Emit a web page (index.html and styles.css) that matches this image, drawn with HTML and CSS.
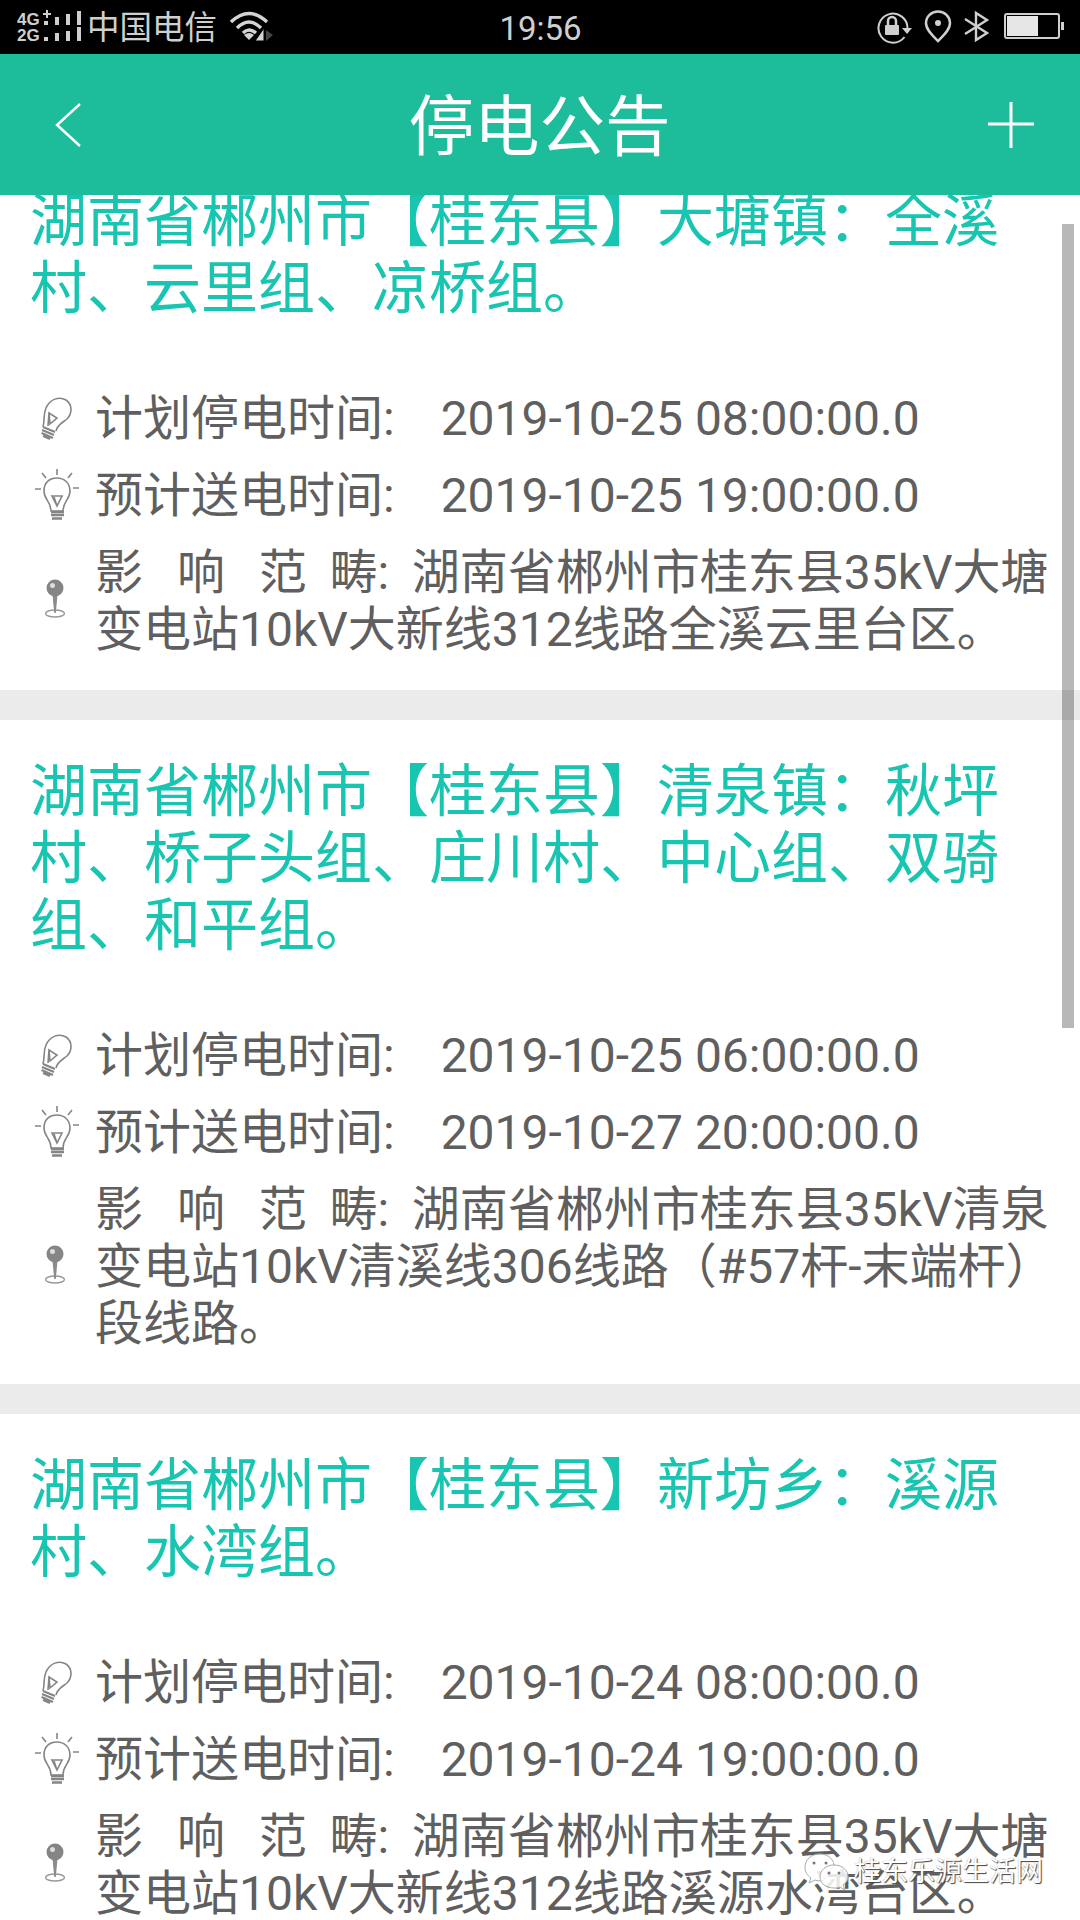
FILE: index.html
```html
<!DOCTYPE html>
<html lang="zh-CN">
<head>
    <meta charset="UTF-8">
    <meta name="viewport" content="width=device-width, initial-scale=1.0">
    <title>停电公告</title>
    <link rel="stylesheet" href="styles.css">
</head>
<body>
    <!-- Shared icons -->
    <svg class="sprite" width="0" height="0">
        <symbol id="bulb-off" viewBox="0 0 46 56">
            <g fill="none" stroke="#858585" stroke-width="1.6">
                <path d="M9 36C11 28 9 24 12 17C16 8 25 5 32 9C39 14 38 23 33 28C28 32 23 34 22 40"/>
                <path d="M15 22L23 27L16 33ZM15 22L14 35"/>
                <path d="M9 36L21 41M8 39L20 44M7.500 42L19 47M9 45L16 48" stroke-width="2"/>
            </g>
        </symbol>
        <symbol id="bulb-on" viewBox="0 0 46 56">
            <g fill="none" stroke="#858585" stroke-width="1.6">
                <path d="M17 43C17 33 10 32 10 23C10 14 16 10 23 10C30 10 36 15 36 23C36 32 29 33 29 43Z"/>
                <path d="M18 28H28L23 38ZM20 29L23 38"/>
                <path d="M23 1V7M8 5L12 10M38 5L34 10M1 21H7M39 20H45"/>
                <path d="M17 44H30M17 47H30M18 50.500H28" stroke-width="2.6"/>
            </g>
        </symbol>
        <symbol id="pin" viewBox="0 0 46 56">
            <ellipse cx="21" cy="40.500" rx="9.500" ry="3.500" fill="none" stroke="#999" stroke-width="1.400"/>
            <path d="M18.500 22H23.500L21.800 40H20.200Z" fill="#8c8c8c"/>
            <circle cx="21" cy="15" r="8.500" fill="#858585"/>
            <circle cx="18.500" cy="12.500" r="2.500" fill="#ddd"/>
        </symbol>
    </svg>

    <div class="status-bar">
        <div class="status-left">
            <svg class="signal" width="68" height="36" viewBox="0 0 68 36">
                <g fill="#cfcfcf">
                    <text x="0" y="16" class="net">4G</text>
                    <text x="0" y="32" class="net">2G</text>
                    <path d="M26 4H34V6H26ZM29 1H31V9H29Z"/>
                    <path d="M27 12H31V16H27ZM38 8H42V16H38ZM49 5H53V16H49ZM60 2H64V16H60Z"/>
                    <path d="M27 28H31V32H27ZM38 24H42V32H38ZM49 22H53V32H49ZM60 18H64V32H60Z"/>
                </g>
            </svg>
            <span class="carrier">中国电信</span>
            <svg class="wifi" width="44" height="32" viewBox="0 0 44 32">
                <g fill="none" stroke="#d4d4d4" stroke-width="3.4">
                    <path d="M1 11Q19 -6 37 11"/>
                    <path d="M7 17Q19 5 31 17"/>
                    <path d="M13 22Q19 16 26 22"/>
                </g>
                <path d="M19 29L14 24Q19 20 24 24Z" fill="#d4d4d4"/>
                <path d="M34 17V30H25Z" fill="#d4d4d4" stroke="#000"/>
                <path d="M36 19L43 24L36 30Z" fill="#444"/>
            </svg>
        </div>
        <div class="clock">19:56</div>
        <div class="status-right">
            <svg width="38" height="34" viewBox="0 0 38 34">
                <path d="M28.500 27A14.500 14.500 0 1 1 31.500 18" fill="none" stroke="#cfcfcf" stroke-width="2"/>
                <path d="M26 18H36L31 24Z" fill="#cfcfcf"/>
                <rect x="9" y="15" width="14" height="10" rx="1" fill="#cfcfcf"/>
                <path d="M12 16V11A4 4 0 0 1 20 11V16" fill="none" stroke="#cfcfcf" stroke-width="2.500"/>
            </svg>
            <svg class="place" width="28" height="34" viewBox="0 0 28 34">
                <path d="M14 31C9 26 2 20 2 13A12 11.500 0 0 1 26 13C26 20 19 26 14 31Z" fill="none" stroke="#cfcfcf" stroke-width="2.500"/>
                <circle cx="14" cy="13" r="3" fill="#cfcfcf"/>
            </svg>
            <svg class="bluetooth" width="26" height="34" viewBox="0 0 26 34">
                <path d="M1 9L23 23L12 30V3L23 10L1 24" fill="none" stroke="#cfcfcf" stroke-width="2.400"/>
            </svg>
            <svg class="battery" width="60" height="34" viewBox="0 0 60 34">
                <rect x="1" y="4" width="54" height="24" rx="2" fill="none" stroke="#cfcfcf" stroke-width="2"/>
                <rect x="3" y="6" width="31" height="20" fill="#e6e6e6"/>
                <rect x="57" y="12" width="3" height="8" fill="#cfcfcf"/>
            </svg>
        </div>
    </div>

    <div class="header">
        <svg width="30" height="46" viewBox="0 0 30 46">
            <path d="M26 2L3 23L26 44" fill="none" stroke="#fff" stroke-width="2.500"/>
        </svg>
        <h1>停电公告</h1>
        <svg width="46" height="46" viewBox="0 0 46 46">
            <path d="M0 22H46M23 0V46" fill="none" stroke="#fff" stroke-width="3"/>
        </svg>
    </div>

    <div class="list">
        <div class="card scrolled">
            <h2>湖南省郴州市【桂东县】大塘镇：全溪村、云里组、凉桥组。</h2>
            <div class="row">
                <svg class="icon"><use href="#bulb-off"/></svg>
                <p>计划停电时间:<span class="date">2019-10-25 08:00:00.0</span></p>
            </div>
            <div class="row">
                <svg class="icon"><use href="#bulb-on"/></svg>
                <p>预计送电时间:<span class="date">2019-10-25 19:00:00.0</span></p>
            </div>
            <div class="row">
                <svg class="icon"><use href="#pin"/></svg>
                <p><span class="scope">影&nbsp;&nbsp; 响&nbsp;&nbsp; 范&nbsp; 畴:&nbsp; </span>湖南省郴州市桂东县35kV大塘变电站10kV大新线312线路全溪云里台区。</p>
            </div>
        </div>

        <div class="card">
            <h2>湖南省郴州市【桂东县】清泉镇：秋坪村、桥子头组、庄川村、中心组、双骑组、和平组。</h2>
            <div class="row">
                <svg class="icon"><use href="#bulb-off"/></svg>
                <p>计划停电时间:<span class="date">2019-10-25 06:00:00.0</span></p>
            </div>
            <div class="row">
                <svg class="icon"><use href="#bulb-on"/></svg>
                <p>预计送电时间:<span class="date">2019-10-27 20:00:00.0</span></p>
            </div>
            <div class="row">
                <svg class="icon"><use href="#pin"/></svg>
                <p><span class="scope">影&nbsp;&nbsp; 响&nbsp;&nbsp; 范&nbsp; 畴:&nbsp; </span>湖南省郴州市桂东县35kV清泉变电站10kV清溪线306线路（#57杆-末端杆）段线路。</p>
            </div>
        </div>

        <div class="card">
            <h2>湖南省郴州市【桂东县】新坊乡：溪源村、水湾组。</h2>
            <div class="row">
                <svg class="icon"><use href="#bulb-off"/></svg>
                <p>计划停电时间:<span class="date">2019-10-24 08:00:00.0</span></p>
            </div>
            <div class="row">
                <svg class="icon"><use href="#bulb-on"/></svg>
                <p>预计送电时间:<span class="date">2019-10-24 19:00:00.0</span></p>
            </div>
            <div class="row">
                <svg class="icon"><use href="#pin"/></svg>
                <p><span class="scope">影&nbsp;&nbsp; 响&nbsp;&nbsp; 范&nbsp; 畴:&nbsp; </span>湖南省郴州市桂东县35kV大塘变电站10kV大新线312线路溪源水湾台区。</p>
            </div>
        </div>
    </div>

    <div class="scrollbar"></div>

    <div class="watermark">
        <svg width="46" height="38" viewBox="0 0 46 38">
            <g fill="#fff" fill-opacity="0.85" stroke="#aaa" stroke-width="1">
                <path d="M16 1C7 1 1 7 1 14C1 19 3 22 7 25L5 30L11 27C14 28 17 28 20 27L30 12C29 5 23 1 16 1Z"/>
                <path d="M30 12C22 12 16 17 16 24C16 31 23 35 30 35C32 35 34 35 36 34L41 37L39 32C42 30 44 27 44 24C44 17 38 12 30 12Z"/>
            </g>
            <g fill="#777">
                <circle cx="10" cy="10" r="1.500"/>
                <circle cx="22" cy="10" r="1.500"/>
                <circle cx="25" cy="20" r="1.500"/>
                <circle cx="35" cy="20" r="1.500"/>
            </g>
        </svg>
        <span>桂东乐源生活网</span>
    </div>
</body>
</html>
```
FILE: styles.css
```css
* {
    margin: 0;
    padding: 0;
    box-sizing: border-box;
}
body {
    width: 1080px;
    height: 1920px;
    font-family: Roboto, "Noto Sans CJK SC", sans-serif;
    background-color: #ffffff;
    display: flex;
    flex-direction: column;
    overflow: hidden;
    position: relative;
}
svg {
    display: block;
    flex-shrink: 0;
}
.sprite {
    position: absolute;
}

/* Phone status bar */
.status-bar {
    height: 54px;
    flex-shrink: 0;
    background: #000;
    color: #cfcfcf;
    display: grid;
    grid-template-columns: 1fr auto 1fr;
    align-items: center;
    padding: 0 16px 0 17px;
    font-size: 33px;
    line-height: 54px;
}
.status-left,
.status-right {
    display: flex;
    align-items: center;
}
.status-right {
    justify-content: flex-end;
}
.clock {
    padding-top: 3px;
    line-height: 51px;
}
.net {
    font-family: "Liberation Sans", sans-serif;
    font-size: 17px;
    font-weight: bold;
}
.carrier {
    font-size: 32.5px;
    line-height: 51px;
    padding-top: 3px;
    margin-left: 2px;
}
.wifi {
    margin-left: 13px;
}
.place {
    margin-left: 10px;
}
.bluetooth {
    margin-left: 12px;
}
.battery {
    margin-left: 14px;
}

.header {
    height: 141px;
    flex-shrink: 0;
    background: #1dbd9c;
    color: #fff;
    display: flex;
    justify-content: space-between;
    align-items: center;
    padding: 0 46px 0 54px;
}
.header h1 {
    font-size: 65.5px;
    font-weight: normal;
    line-height: 135px;
    padding: 6px 0 0 7px;
}

/* Notices */
.list {
    flex: 1;
    overflow: hidden;
    background: #ebebeb;
}
.card {
    background: #fff;
    padding: 38px 24px 32px 30px;
    margin-bottom: 30px;
}
.card.scrolled {
    margin-top: -45px; /* first card sits partly under the header */
}
.card h2 {
    font-size: 57px;
    font-weight: normal;
    line-height: 67px;
    color: #17c5b0;
    margin-bottom: 68px;
}
.row {
    display: flex;
    align-items: center;
    margin-bottom: 20px;
    color: #5f5f5f;
    font-size: 48px;
    line-height: 57px;
}
.row:last-child {
    margin-bottom: 0;
}
.icon {
    width: 46px;
    height: 56px;
    margin: 0 15px 0 4px;
}
.row p {
    width: 960px;
}
.scope {
    word-spacing: -0.6px;
}
.date {
    margin-left: 46px;
}

.scrollbar {
    position: absolute;
    top: 224px;
    right: 6px;
    width: 12px;
    height: 804px;
    background: rgba(0, 0, 0, 0.28);
}

.watermark {
    position: absolute;
    right: 37px;
    bottom: 29px;
    display: flex;
    align-items: center;
    gap: 4px;
    color: #fff;
    font-size: 27px;
    line-height: 38px;
    text-shadow: 1px 1px 1px #444, 0 0 1px #999;
}
```
